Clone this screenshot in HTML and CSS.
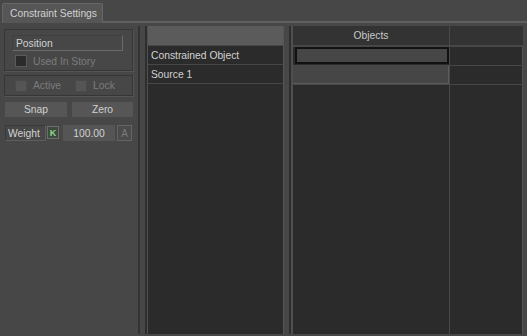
FILE: index.html
```html
<!DOCTYPE html>
<html>
<head>
<meta charset="utf-8">
<link rel="stylesheet" href="styles.css">
</head>
<body>
<div class="app">
  <div class="tabbar">
    <div class="tab">Constraint Settings</div>
    <div class="tabline"></div>
  </div>
  <div class="content">
    <div class="left">
      <div class="group g1">
        <div class="field">Position</div>
        <div class="check-row">
          <span class="cb dark"></span><span class="dis">Used In Story</span>
        </div>
      </div>
      <div class="group g2">
        <span class="cb grey"></span><span class="dis lbl-active">Active</span>
        <span class="cb grey"></span><span class="dis">Lock</span>
      </div>
      <div class="btn-row">
        <div class="btn">Snap</div>
        <div class="btn">Zero</div>
      </div>
      <div class="weight-row">
        <div class="wlabel">Weight</div>
        <div class="kbtn">K</div>
        <div class="wval">100.00</div>
        <div class="abtn">A</div>
      </div>
    </div>
    <div class="split s1"><i class="d1"></i><i class="g"></i><i class="d2"></i></div>
    <div class="mid">
      <div class="mhead"></div>
      <div class="mrow">Constrained Object</div>
      <div class="mrow">Source 1</div>
      <div class="mfill"></div>
    </div>
    <div class="split s2"><i class="d1"></i><i class="g"></i><i class="d2"></i></div>
    <div class="grid">
      <div class="gh c1">Objects</div>
      <div class="gh c2"></div>
      <div class="gc c1"><div class="sel"></div></div>
      <div class="gc c2"></div>
      <div class="gc c1"><div class="src"></div></div>
      <div class="gc c2"></div>
      <div class="gfill c1"></div>
      <div class="gfill c2"></div>
    </div>
  </div>
</div>
</body>
</html>
```
FILE: styles.css
```css
* { box-sizing: border-box; }
html, body { margin: 0; padding: 0; }
body {
  width: 527px;
  height: 336px;
  background: #474747;
  font-family: "Liberation Sans", Arial, sans-serif;
  font-size: 10.3px;
  color: #cfcfcf;
  overflow: hidden;
}
.app { display: flex; flex-direction: column; height: 336px; }
.tabbar { display: flex; align-items: flex-end; height: 23px; padding-left: 2px; }
.tab {
  width: 101px;
  height: 20px;
  background: #565656;
  border: 1px solid #666;
  border-bottom: none;
  border-radius: 2px 2px 0 0;
  padding: 4px 0 0 7px;
  color: #d0d0d0;
  white-space: nowrap;
}
.tabline { flex: 1; height: 2px; background: #5e5e5e; border-top: 1px solid #626262; }
.content { display: flex; flex: 1; padding-top: 3px; padding-bottom: 2px; }
.left { width: 138px; padding: 3px 5px 0 4px; display: flex; flex-direction: column; }
.group {
  border: 1px solid #363636;
  box-shadow: 1px 1px 0 #555;
}
.g1 { height: 42px; padding: 5px 0 0 7px; }
.field {
  width: 111px;
  height: 16px;
  border: 1px solid #3f3f3f;
  border-right-color: #6a6a6a;
  border-bottom-color: #6a6a6a;
  padding: 2px 0 0 3px;
  color: #d2d2d2;
}
.check-row { display: flex; align-items: center; margin-top: 4px; padding-left: 3px; }
.cb { width: 12px; height: 12px; display: inline-block; flex: none; }
.cb.dark { background: #2b2b2b; border: 1px solid #5a5a5a; }
.cb.grey { background: #555; border: 1px solid #4a4a4a; }
.dis { color: #7c7c7c; margin-left: 6px; }
.g2 { margin-top: 4px; height: 21px; display: flex; align-items: center; padding-left: 10px; }
.lbl-active { margin-right: 14px; }
.btn-row { display: flex; gap: 5px; margin-top: 6px; padding-left: 1px; }
.btn {
  height: 15px;
  background: #565656;
  color: #d0d0d0;
  display: flex; align-items: center; justify-content: center;
}
.btn:first-child { width: 62px; }
.btn:last-child { width: 61px; }
.weight-row { display: flex; margin-top: 8px; padding-left: 1px; height: 16px; }
.wlabel {
  width: 41px;
  border: 1px solid #5e5e5e;
  border-top-color: #3a3a3a;
  border-left-color: #3a3a3a;
  padding: 2px 0 0 2px;
  color: #d2d2d2;
}
.kbtn {
  width: 12px;
  height: 13px;
  margin: 1px 0 0 1px;
  background: #3d4a3d;
  border: 1px solid #6d6d6d;
  color: #8fd68f;
  font-weight: bold;
  font-size: 9px;
  display: flex; align-items: center; justify-content: center;
}
.wval {
  width: 52px;
  margin-left: 4px;
  background: #555;
  color: #d2d2d2;
  display: flex; align-items: center; justify-content: center;
}
.abtn {
  width: 15px;
  margin-left: 2px;
  border: 1px solid #646464;
  background: #4b4b4b;
  color: #7a7a7a;
  font-size: 10px;
  display: flex; align-items: center; justify-content: center;
}
.split { display: flex; height: 100%; }
.split i { display: block; height: 100%; }
.s1 .d1 { width: 2px; background: #333; }
.s1 .g { width: 5px; background: #474747; }
.s1 .d2 { width: 2px; background: #2e2e2e; }
.s2 .d1 { width: 1px; background: #555; }
.s2 .g { width: 5px; background: #474747; }
.s2 .d2 { width: 2px; background: #2e2e2e; }
.s2 { border-right: 2px solid #4f4f4f; }
.s1 { border-right: 1px solid #505050; }
.mid { width: 135px; display: flex; flex-direction: column; background: #2b2b2b; }
.mhead { height: 20px; background: #5b5b5b; border-bottom: 1px solid #474747; }
.mrow {
  height: 19px;
  border-bottom: 1px solid #474747;
  padding: 4px 0 0 3px;
  color: #d2d2d2;
  white-space: nowrap;
}
.mfill { flex: 1; }
.grid {
  width: 230px;
  display: grid;
  grid-template-columns: 157px 73px;
  grid-template-rows: 21px 19px 19px 1fr;
  background: #2b2b2b;
  border-right: 1px solid #555;
}
.c1 { border-right: 1px solid #4a4a4a; }
.gh { background: #333; border-bottom: 2px solid #474747; display: flex; align-items: center; justify-content: center; color: #c8c8c8; padding-bottom: 1px; }
.gc { border-bottom: 1px solid #474747; }
.sel { height: 17px; margin: 0 0 0 2px; background: #464646; border: 2px solid #111; }
.src { height: 18px; background: #464646; border-right: 1px solid #5c5c5c; border-bottom: 1px solid #5c5c5c; }
```
